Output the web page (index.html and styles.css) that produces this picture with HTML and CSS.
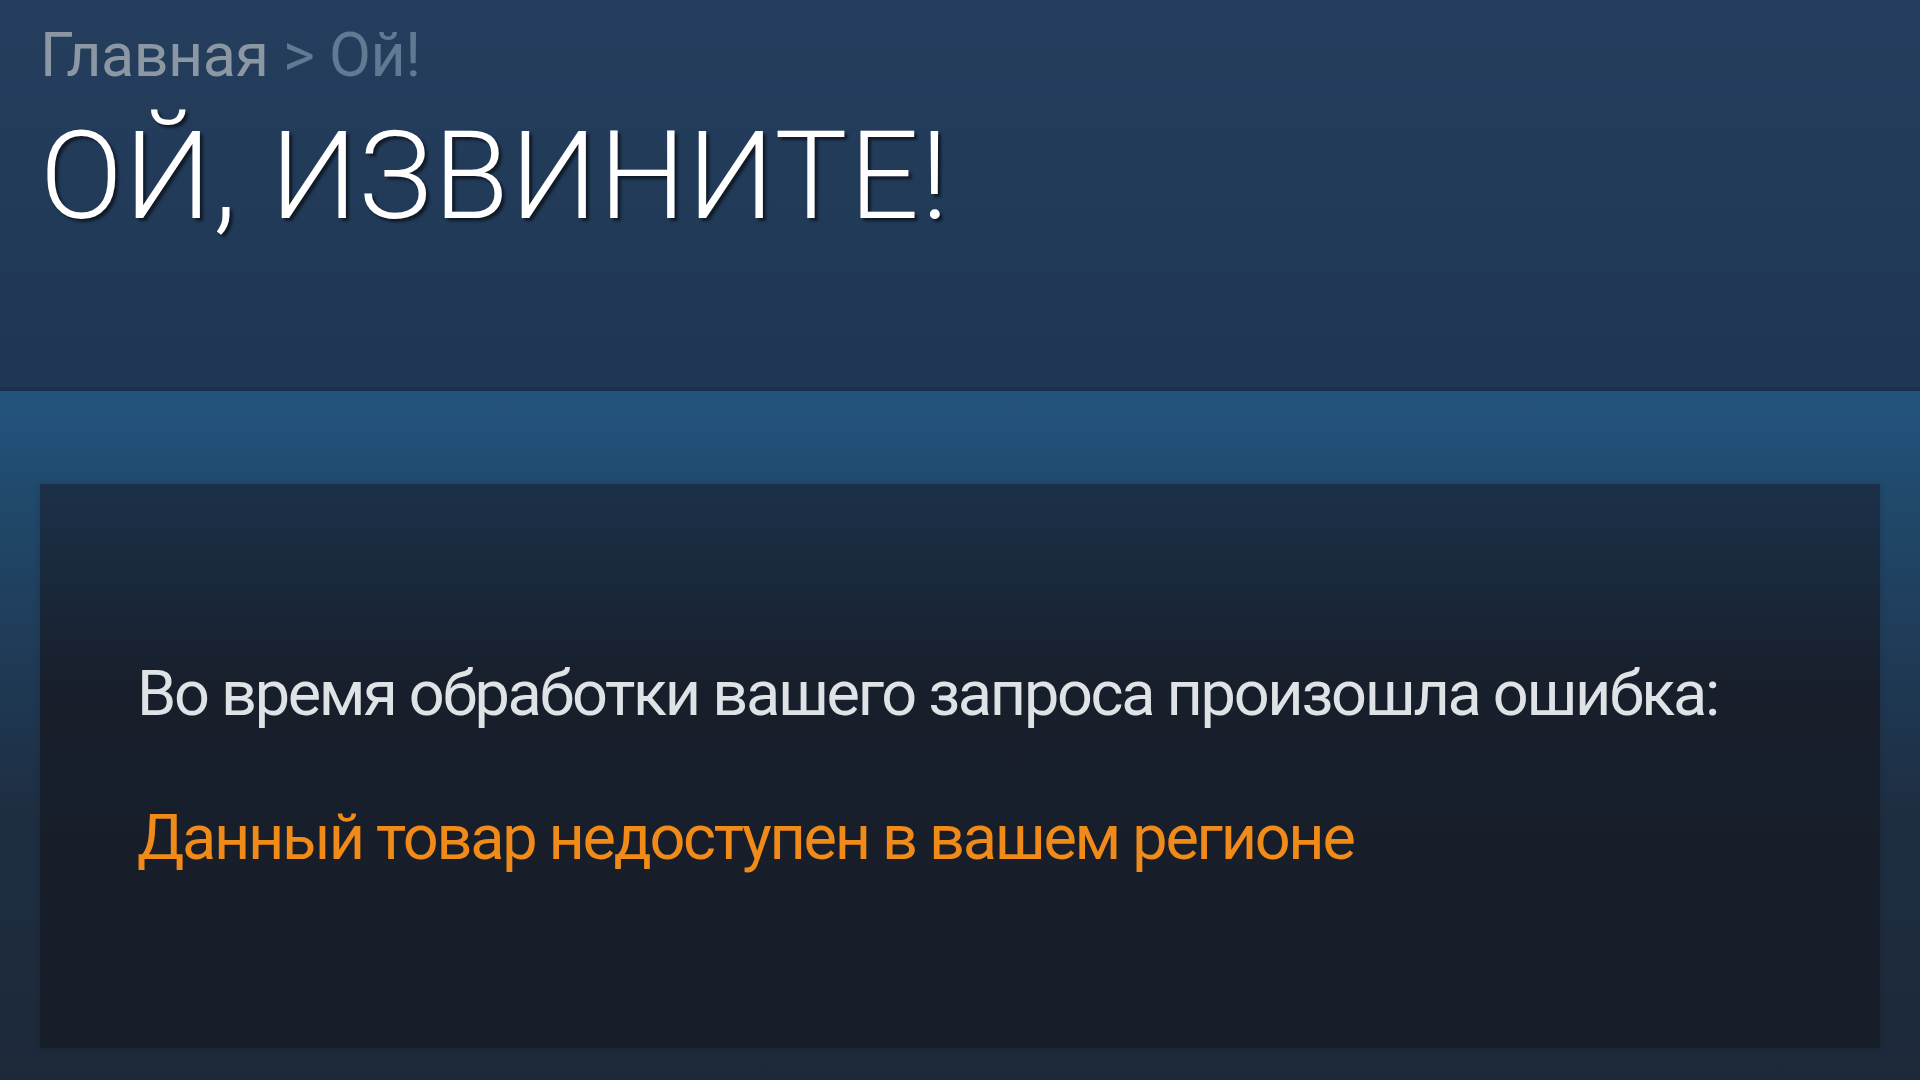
FILE: index.html
```html
<!DOCTYPE html>
<html lang="ru">

<head>
    <meta charset="UTF-8">
    <meta name="viewport" content="width=device-width, initial-scale=1.0">
    <title>Ой!</title>
    <link rel="stylesheet" href="styles.css">
</head>

<body>
    <div class="page-head">
        <div class="breadcrumbs">
            <a href="#">Главная</a> <span class="sep">&gt;</span> <span class="current">Ой!</span>
        </div>
        <h1 class="page-title">ОЙ, ИЗВИНИТЕ!</h1>
    </div>

    <div class="page-body">
        <div class="error-box">
            <p class="error-intro">Во время обработки вашего запроса произошла ошибка:</p>
            <p class="error-text">Данный товар недоступен в вашем регионе</p>
        </div>
    </div>
</body>

</html>
```

FILE: styles.css
```css
* {
    margin: 0;
    padding: 0;
    box-sizing: border-box;
    font-family: Roboto, 'Noto Sans', sans-serif;
}

html,
body {
    height: 100%;
}

body {
    background-color: #1d2939;
    display: flex;
    flex-direction: column;
}

.page-head {
    height: 391px;
    padding: 19px 40px 0;
    background: linear-gradient(180deg, #253e5d 0%, #213a58 60%, #1f3654 100%);
    border-bottom: 4px solid #1b2f4a;
}

.breadcrumbs {
    font-size: 61px;
    line-height: 72px;
    letter-spacing: -0.5px;
    color: #8b98a4;
}

.breadcrumbs a {
    color: #8b98a4;
    text-decoration: none;
}

.breadcrumbs .sep,
.breadcrumbs .current {
    color: #5f7a93;
}

.page-title {
    margin-top: 16px;
    font-size: 122px;
    font-weight: 300;
    line-height: 140px;
    color: #ffffff;
    letter-spacing: 2px;
    text-shadow: 3px 3px 3px rgba(0, 0, 0, 0.55);
}

.page-body {
    flex: 1;
    padding: 93px 40px 32px;
    background: linear-gradient(180deg, #24547a 0px, #22507a 40px, #204a6c 100px, #1f3b57 260px, #1e2e42 420px, #1d2939 100%);
}

.error-box {
    height: 564px;
    padding: 173px 97px 0;
    background: linear-gradient(180deg, #1c3049 0px, #1a2a3e 80px, #181f2c 200px, #171e29 100%);
    box-shadow: 0 0 6px rgba(0, 0, 0, 0.15);
}

.error-intro,
.error-text {
    font-size: 63px;
    line-height: 74px;
    letter-spacing: -2.3px;
    white-space: nowrap;
}

.error-intro {
    color: #dfe3e6;
}

.error-text {
    margin-top: 70px;
    color: #f08a19;
}
```
